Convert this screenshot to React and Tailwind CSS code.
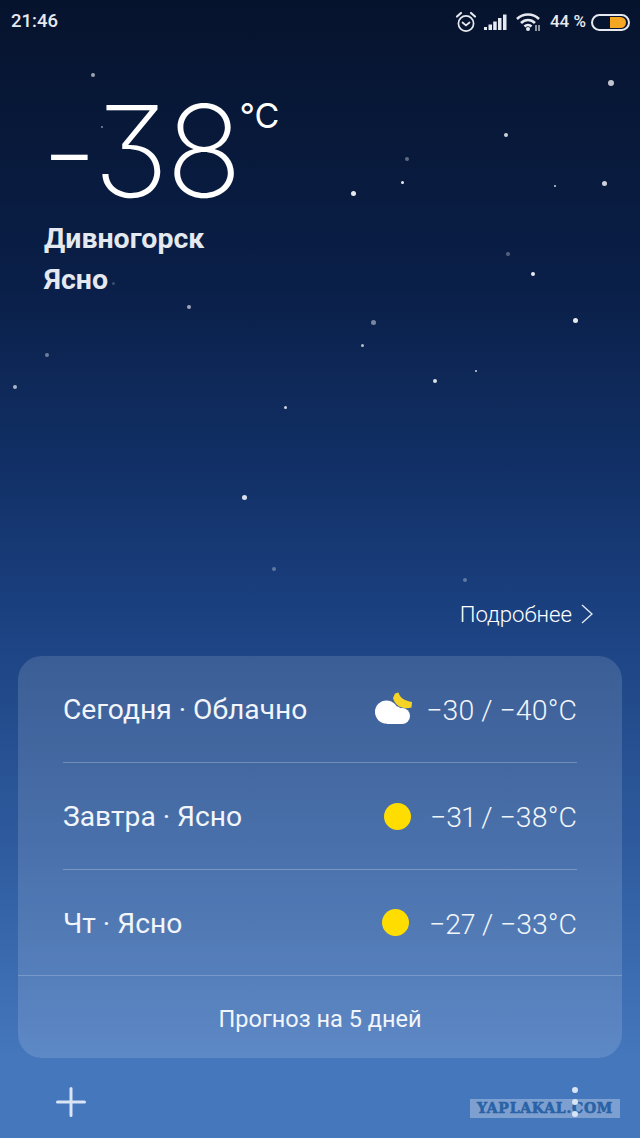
import React from "react";

const stars = [
  [93, 75, 4, 0.6], [102, 127, 2.5, 0.5], [611, 83, 6, 0.75], [506, 135, 4, 0.8], [604, 183, 5, 0.8],
  [407, 159, 4, 0.35], [353, 193, 5, 0.9], [402, 182, 3, 0.9], [555, 186, 2.5, 0.8], [508, 254, 4, 0.3],
  [533, 274, 4, 0.9], [575, 320, 5, 0.9], [373, 322, 5, 0.45], [362, 345, 3, 0.7], [189, 307, 4, 0.6],
  [47, 355, 4, 0.4], [15, 387, 4, 0.65], [435, 381, 4, 0.85], [476, 371, 2, 0.8], [285, 407, 3, 0.8],
  [244, 497, 5, 0.85], [274, 569, 4, 0.3], [465, 580, 4, 0.3], [113, 283, 3, 0.2],
];

function Row({ label, temp, icon, height = "h-[107px]", border = true }) {
  return (
    <div className={`${height} mx-[45px] flex items-center justify-between ${border ? "border-b border-white/25" : ""}`}>
      <span className="pt-[3px]">{label}</span>
      <div className="flex items-center">
        {icon}
        <span className="font-light text-[28.4px] pt-[5px] proportional-nums">{temp}</span>
      </div>
    </div>
  );
}

function Sun({ mr }) {
  return <div className={`w-[27px] h-[27px] rounded-full bg-[#ffdd00] mt-[1px] ${mr}`} />;
}

function CloudMoon() {
  return (
    <svg width="37" height="33" viewBox="0 0 37 33" className="mr-[14px] mb-[1px]">
      <path d="M20 1.5 L23.5 0.5 C25 6 30 9 37 10 L36.5 15.5 C28 18 20 14 18 6 Z" fill="#f5d327" />
      <circle cx="11.5" cy="20" r="11.5" fill="#fff" />
      <circle cx="20" cy="23" r="9" fill="#fff" />
      <circle cx="27" cy="24" r="8" fill="#fff" />
      <rect x="11.5" y="22" width="15.5" height="10" fill="#fff" />
    </svg>
  );
}

export default function App() {
  return (
    <div
      className="relative w-[640px] h-[1138px] overflow-hidden flex flex-col text-white bg-[linear-gradient(180deg,#06132d_0%,#0a1f48_25%,#123168_42%,#1c4282_55%,#2f5c9f_75%,#4577bd_93%,#4577bd_100%)] font-['Roboto',sans-serif]"
    >
      {stars.map(([x, y, s, o], i) => (
        <span
          key={i}
          className="absolute rounded-full bg-white blur-[0.5px]"
          style={{ left: x - s / 2, top: y - s / 2, width: s, height: s, opacity: o }}
        />
      ))}

      {/* Watermark */}
      <div className="absolute left-[470px] top-[1099px] w-[150px] h-[19px] bg-white/30 flex items-center justify-center text-[#2a62a6] text-[14px] font-black tracking-[0.75px] font-['DejaVu_Serif',serif] [-webkit-text-stroke:0.6px_#2a62a6]">
        YAPLAKAL.COM
      </div>

      {/* Status bar */}
      <div className="relative h-[44px] px-[11px] flex items-center justify-between text-[#e6e9ef] text-[17px] font-medium">
        <span className="text-[18.5px]">21:46</span>
        <div className="flex items-center mr-[-1px]">
          <svg width="22" height="22" viewBox="0 0 22 22" fill="none" stroke="#e6e9ef" strokeWidth="1.7" strokeLinecap="round" className="mr-[7px]">
            <circle cx="11" cy="12.5" r="7.6" />
            <path d="M7.5 11.5l3.5 3 3.5-3" />
            <path d="M2 5.5 L6 2 M20 5.5 L16 2" strokeWidth="2.2" />
          </svg>
          <svg width="24" height="16" viewBox="0 0 24 16" fill="#e6e9ef" className="mr-[8px]">
            <rect x="0" y="13" width="3" height="3" />
            <rect x="4.5" y="10.5" width="3.5" height="5.5" />
            <rect x="9.2" y="7.5" width="3.5" height="8.5" />
            <rect x="14" y="4" width="3.5" height="12" />
            <rect x="19" y="0.5" width="3.5" height="15.5" />
          </svg>
          <svg width="26" height="20" viewBox="0 0 26 20" fill="none" stroke="#e6e9ef" strokeWidth="2.6" className="mr-[8px]">
            <path d="M1 7 C7 1 17 1 23 7" />
            <path d="M5 11 C9 7 15 7 19 11" />
            <path d="M8.5 14.5 C10.5 12.5 13.5 12.5 15.5 14.5" />
            <circle cx="12" cy="17" r="2" fill="#e6e9ef" stroke="none" />
            <path d="M20 13 V19 M23 13 V19" strokeWidth="1.2" />
          </svg>
          <span className="mr-[5px]">44 %</span>
          <div className="w-[39px] h-[17px] rounded-full border-2 border-[#e6e9ef] flex items-center justify-end pr-[2px]">
            <div className="w-[16px] h-[11px] rounded-r-full rounded-l-[2px] bg-[#f5a623]" />
          </div>
        </div>
      </div>

      {/* Temperature */}
      <div className="relative ml-[41px] mt-[43px] flex items-start h-[128px] font-['Inter',sans-serif]">
        <span className="block text-[127px] leading-[128px] font-extralight tracking-[-3px] [font-feature-settings:'cv09']">-38</span>
        <span className="block text-[34px] leading-[36px] font-normal mt-[11px] ml-[0px]">°C</span>
      </div>

      <div className="relative ml-[44px] mt-[3px] text-[28.5px] leading-[41px] font-bold text-[#e4e8ef]">
        <div>Дивногорск</div>
        <div>Ясно</div>
      </div>

      <div className="flex-1" />

      <div className="relative flex items-center justify-end pr-[46px] mb-[28px] text-[22.2px] leading-[28px] text-white">
        <span className="font-light">Подробнее</span>
        <svg width="14" height="20" viewBox="0 0 14 20" fill="none" stroke="#e8edf5" strokeWidth="1.3" className="ml-[8px]">
          <path d="M2 1 L12 10 L2 19" />
        </svg>
      </div>

      {/* Card */}
      <div className="relative mx-[18px] h-[402px] rounded-[24px] bg-white/[0.13] text-[28.2px] text-[#f2f5fa]">
        <Row label="Сегодня · Облачно" temp="−30 / −40°C" icon={<CloudMoon />} />
        <Row label="Завтра · Ясно" temp="−31 / −38°C" icon={<Sun mr="mr-[19px]" />} />
        <Row label="Чт · Ясно" temp="−27 / −33°C" icon={<Sun mr="mr-[20px]" />} height="h-[105px]" border={false} />
        <div className="h-[83px] border-t border-white/20 flex items-center justify-center text-[23.5px] pt-[6px]">Прогноз на 5 дней</div>
      </div>

      {/* Bottom bar */}
      <div className="relative h-[80px] flex items-start justify-between pl-[56px] pr-[62px] pt-[29px]">
        <svg width="30" height="30" viewBox="0 0 30 30" fill="none" stroke="#d9e4f5" strokeWidth="3" strokeLinecap="round">
          <path d="M15 1.5 V28.5 M1.5 15 H28.5" />
        </svg>
        <div className="flex flex-col gap-[6px]">
          <span className="w-[6px] h-[6px] rounded-full bg-[#d9e4f5]" />
          <span className="w-[6px] h-[6px] rounded-full bg-[#d9e4f5]" />
          <span className="w-[6px] h-[6px] rounded-full bg-[#d9e4f5]" />
        </div>
      </div>
    </div>
  );
}
